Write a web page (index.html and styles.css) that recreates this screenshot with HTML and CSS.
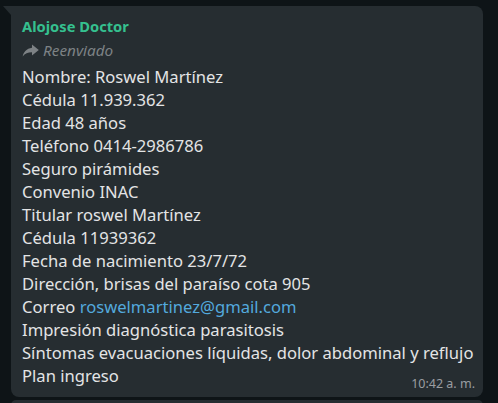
FILE: index.html
```html
<!DOCTYPE html>
<html lang="es">
<head>
<meta charset="utf-8">
<link rel="stylesheet" href="styles.css">
</head>
<body>
<div class="chat">
  <div class="bubble first">
    <span class="tail"></span>
    <div class="author">Alojose Doctor</div>
    <div class="forwarded">
      <svg class="fwd-icon" viewBox="0 0 16 12" width="17" height="13"><path d="M9.4 0.4v3.1C4.2 4.2 1.6 7.6 0.6 11.6c2.2-2.9 4.9-4 8.8-4v3.2L15.8 5.6z" fill="#7d8285"/></svg>
      <span>Reenviado</span>
    </div>
    <div class="text">
      <div>Nombre: Roswel Martínez</div>
      <div>Cédula 11.939.362</div>
      <div>Edad 48 años</div>
      <div>Teléfono 0414-2986786</div>
      <div>Seguro pirámides</div>
      <div>Convenio INAC</div>
      <div>Titular roswel Martínez</div>
      <div>Cédula 11939362</div>
      <div>Fecha de nacimiento 23/7/72</div>
      <div>Dirección, brisas del paraíso cota 905</div>
      <div>Correo <a class="link" href="#">roswelmartinez@gmail.com</a></div>
      <div>Impresión diagnóstica parasitosis</div>
      <div>Síntomas evacuaciones líquidas, dolor abdominal y reflujo</div>
      <div>Plan ingreso</div>
    </div>
    <div class="meta">10:42 a. m.</div>
  </div>
  <div class="bubble next"></div>
</div>
</body>
</html>
```
FILE: styles.css
```css
html, body {
  margin: 0;
  padding: 0;
}
body {
  background: #0e1417;
  width: 498px;
  height: 403px;
  overflow: hidden;
  font-family: "Segoe UI", "Noto Sans", sans-serif;
}
.chat {
  padding: 6px 15px 0 11px;
  display: flex;
  flex-direction: column;
  gap: 3px;
}
.bubble {
  background: #262d31;
  border-radius: 0 8px 8px 8px;
  position: relative;
  width: 472px;
  box-sizing: border-box;
}
.first {
  padding: 9px 8px 6px 11px;
}
.tail {
  position: absolute;
  left: -8px;
  top: 0;
  width: 0;
  height: 0;
  border-top: 9px solid #262d31;
  border-left: 8px solid transparent;
}
.next {
  height: 5px;
  border-radius: 8px 8px 0 0;
}
.author {
  color: #35c08f;
  font-weight: 700;
  font-size: 14.7px;
  line-height: 22px;
}
.forwarded {
  display: flex;
  align-items: center;
  gap: 4px;
  color: #7d8285;
  font-style: italic;
  font-size: 15.3px;
  line-height: 22px;
  margin-top: 2px;
}
.fwd-icon {
  display: block;
}
.text {
  color: #e3e4e5;
  font-size: 16.6px;
  line-height: 23px;
  margin-top: 4px;
}
.link {
  color: #53a9dd;
  text-decoration: none;
}
.meta {
  text-align: right;
  color: #9a9ea1;
  font-size: 12.5px;
  line-height: 14px;
  margin-top: -10px;
}
```
